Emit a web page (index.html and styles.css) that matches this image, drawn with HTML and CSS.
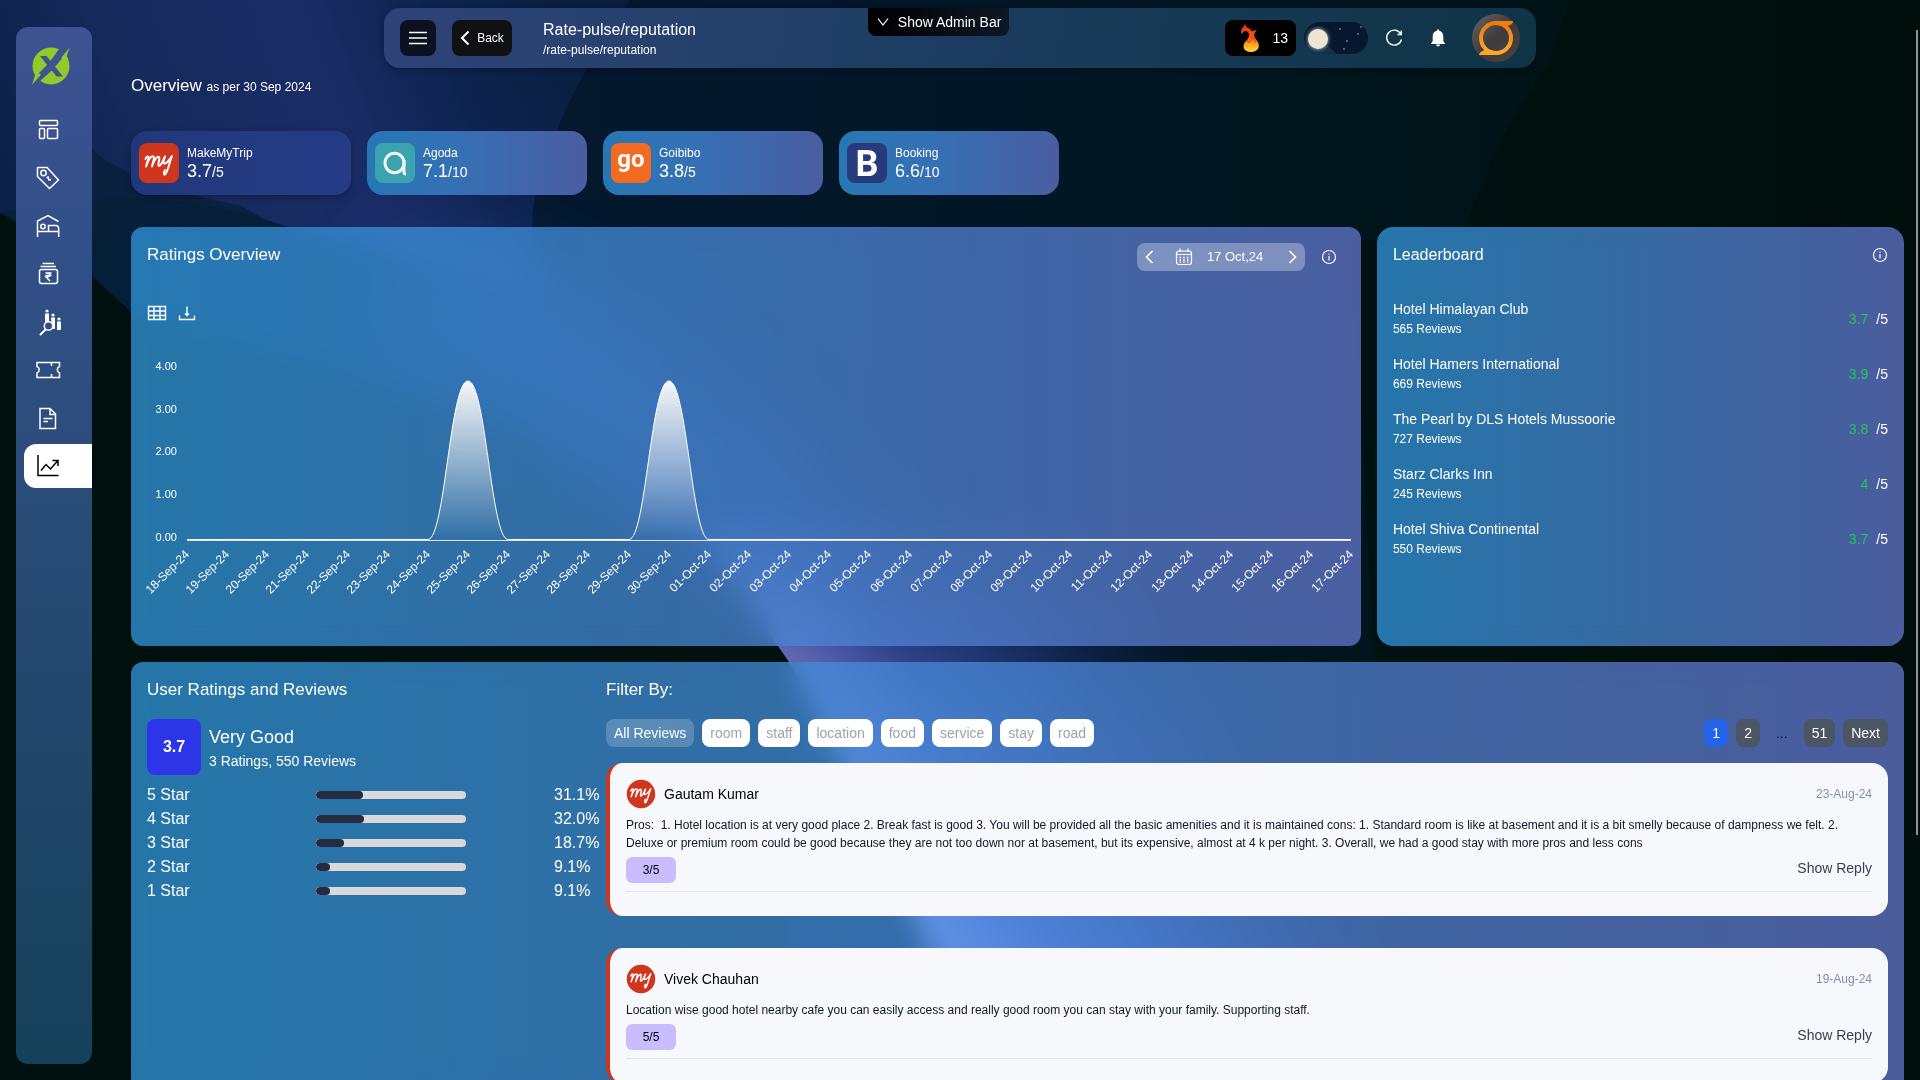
FILE: index.html
```html
<!DOCTYPE html>
<html lang="en">
<head>
<meta charset="utf-8">
<meta name="viewport" content="width=device-width, initial-scale=1">
<title>Rate-pulse/reputation</title>
<link rel="stylesheet" href="styles.css">
</head>
<body>
<svg class="backdrop" viewBox="0 0 1920 1080" preserveAspectRatio="none" aria-hidden="true">
  <defs>
    <linearGradient id="night" x1="0" y1="0" x2="1" y2="0">
      <stop offset="0" stop-color="#06203a"/><stop offset=".3" stop-color="#04182e"/><stop offset=".6" stop-color="#001722"/><stop offset="1" stop-color="#000f0c"/>
    </linearGradient>
    <linearGradient id="swath" gradientUnits="userSpaceOnUse" x1="0" y1="160" x2="560" y2="-60">
      <stop offset="0" stop-color="#0c2148"/><stop offset=".25" stop-color="#162a5c"/><stop offset=".55" stop-color="#1a2c66"/><stop offset=".75" stop-color="#0e2450"/><stop offset="1" stop-color="#071e3c"/>
    </linearGradient>
    <linearGradient id="beam" gradientUnits="userSpaceOnUse" x1="865" y1="795" x2="1187" y2="608">
      <stop offset="0" stop-color="#9a9cff"/><stop offset=".1" stop-color="#7f84f5"/><stop offset=".26" stop-color="#4d60c8"/><stop offset=".5" stop-color="#2c4496"/><stop offset=".7" stop-color="#14295c"/><stop offset="1" stop-color="#0a1c40" stop-opacity="0"/>
    </linearGradient>
    <linearGradient id="beamTop" gradientUnits="userSpaceOnUse" x1="0" y1="480" x2="0" y2="880">
      <stop offset="0" stop-color="#fff" stop-opacity="0"/><stop offset=".42" stop-color="#fff" stop-opacity=".6"/><stop offset="1" stop-color="#fff"/>
    </linearGradient>
    <mask id="beamMask" maskUnits="userSpaceOnUse" x="0" y="0" width="1920" height="1080"><rect width="1920" height="1080" fill="url(#beamTop)"/></mask>
    <filter id="soft" x="-40%" y="-40%" width="180%" height="180%"><feGaussianBlur stdDeviation="50"/></filter>
  </defs>
  <rect width="1920" height="1080" fill="url(#night)"/>
  <path d="M0 0H630C590 60 560 110 548 160C530 200 520 240 560 300L290 228C240 210 180 196 100 198L0 213Z" fill="url(#swath)"/>
  <path d="M92 148C100 165 180 196 240 205L300 240H92Z" fill="#071f3a" opacity=".8"/>
  <path d="M0 213L16 222L92 276L131 312L500 420L740 590L789 662V1080H0Z" fill="#00100e"/>
  <path d="M1350 240L1460 240L1500 140L1550 60L1570 0H1920V1080H1400Z" fill="#000f0d" opacity=".7"/>
  <path d="M400 290C540 330 700 430 840 610" fill="none" stroke="#3e58cc" stroke-width="90" opacity=".45" filter="url(#soft)"/>
  <path d="M0 646H778L789 662V1080H0Z" fill="#00100e"/>
  <path mask="url(#beamMask)" d="M690 520L778 646L789 662C840 760 900 880 985 1080H1500L1300 520Z" fill="url(#beam)"/>
</svg>

<aside class="sidebar">
  <a class="brand" href="#" aria-label="Home">
    <svg width="40" height="40" viewBox="0 0 40 40"><circle cx="20" cy="20" r="18.500" fill="#93c92a"/><path d="M9 10H15.500L32 30.500H25.500Z" fill="#3f5292"/><path d="M28 3L19 15.500L23 21.500L37 9L38 3Z" fill="#3f5292"/><path d="M8 36L22 23.500L17.500 17.500L3 32L2 38Z" fill="#3f5292"/><path d="M24 21L37 5L35.500 10A18.500 18.500 0 0 1 37 13Z" fill="#93c92a"/><path d="M39 1L34.500 12L30 12Z" fill="#93c92a"/><path d="M1 39L5 26L10 28.500Z" fill="#93c92a"/></svg>
  </a>
  <nav class="menu" aria-label="Main">
    <a href="#" aria-label="Dashboard"><svg viewBox="0 0 24 24"><rect x="3.500" y="2.500" width="18" height="5" rx="1"/><rect x="3.500" y="10.500" width="5" height="10" rx="1"/><rect x="11.500" y="10.500" width="10" height="10" rx="1"/></svg></a>
    <a href="#" aria-label="Rates"><svg viewBox="0 0 24 24"><path d="M1.500 2v8.500L13.500 22.500L22.500 14L11 1.500H2Z"/><circle cx="7.500" cy="7" r="2.700"/><path d="M10.500 12l1.500-1 1 3 2-.5"/></svg></a>
    <a href="#" aria-label="Rooms"><svg viewBox="0 0 24 24"><path d="M1.500 23V7L12 1.500L22.500 7.500M1.500 17.500H23M22.700 23V14.500Q22.500 11.500 20 11.500H12.500V17"/><circle cx="7" cy="12.500" r="2.200"/></svg></a>
    <a href="#" aria-label="Revenue"><svg viewBox="0 0 24 24"><path d="M6.500 1.500H18M4.500 4.500H20"/><rect x="3.500" y="7.500" width="18" height="14" rx="2"/><path d="M9.500 11h6M9.500 13.500h6M10.500 11q3.500 0 3.500 1.500q0 2.500-4 2.500l4 4"/></svg></a>
    <a href="#" aria-label="Competitors"><svg class="solid" viewBox="0 0 24 24"><circle cx="11" cy="1" r="1.600"/><circle cx="17" cy="5" r="1.600"/><circle cx="23" cy="9" r="1.600"/><path d="M9 3.500h4V13h-4ZM15 7.500h4V19h-3ZM21 11.500h4V20h-4Z"/><circle cx="12.500" cy="16" r="4.200" class="lens"/><path class="handle" d="M9.500 19.500L4.500 24.500"/></svg></a>
    <a href="#" aria-label="Offers"><svg viewBox="0 0 24 24"><path d="M1 4.500H23.500V8.500A3.500 3.500 0 0 0 23.500 15V19.500H1V15A3.500 3.500 0 0 0 1 8.500ZM15.500 5v3M15.500 16v3"/></svg></a>
    <a href="#" aria-label="Reports"><svg viewBox="0 0 24 24"><path d="M4 2.500H14L19.500 8V22.500H4ZM14 2.500V8.500H19.500M7.500 12.500H16.500M7.500 15.500H12"/></svg></a>
    <a href="#" class="active" aria-label="Reputation" aria-current="page"><svg viewBox="0 0 24 24"><path d="M2 1V21.500H22.500M5 16.500L10 10.500L14.500 15L21.500 7M16.500 6.500H22V12"/></svg></a>
  </nav>
</aside>

<div class="page">
  <header class="topbar">
    <button class="square" aria-label="Toggle menu"><svg width="18" height="14" viewBox="0 0 18 14"><path d="M0 1.500H18M0 7H18M0 12.500H18" stroke="#fff" stroke-width="1.500"/></svg></button>
    <button class="back"><svg width="10" height="16" viewBox="0 0 10 16"><path d="M8.500 1.500L2 8L8.500 14.500" fill="none" stroke="#fff" stroke-width="2"/></svg>Back</button>
    <div class="crumbs">
      <h1>Rate-pulse/reputation</h1>
      <p>/rate-pulse/reputation</p>
    </div>
    <button class="admin"><svg width="12" height="10" viewBox="0 0 12 10"><path d="M1 1.500L6 8L11 1.500" fill="none" stroke="#fff" stroke-width="1.200"/></svg>Show Admin Bar</button>
    <div class="actions">
      <div class="streak">
        <svg width="24" height="30" viewBox="0 0 24 30"><defs><linearGradient id="fire" x1="0" y1="0" x2="0" y2="1"><stop offset="0" stop-color="#e8320c"/><stop offset=".5" stop-color="#f5591a"/><stop offset=".72" stop-color="#fba51c"/><stop offset="1" stop-color="#ffd83a"/></linearGradient></defs><path d="M6 1C5 4 1 6 2.500 11C4 9 5 7.500 7.500 8C12 11 10 14 8 17C2 22 4 29 12 29C20 29 22 22 17.500 17C15 14 14 11 18 7C15 7.500 13 9 11.500 7C12.500 5 9 6 7.500 4Z" fill="url(#fire)"/><path d="M9 8.500c2-1 3 1 5 0M8 17l2 3 4-6 3 6" fill="none" stroke="#d93a06" stroke-width=".8"/></svg>
        <span>13</span>
      </div>
      <input class="theme" type="checkbox" aria-label="Dark mode">
      <button class="plain" aria-label="Refresh"><svg width="18" height="18" viewBox="0 0 18 18"><path d="M15.500 4.500A7.500 7.500 0 1 0 16.500 10.500M16.300 1.500V5.500H12.500" fill="none" stroke="#fff" stroke-width="1.400"/></svg></button>
      <button class="plain" aria-label="Notifications"><svg width="16" height="18" viewBox="0 0 16 18"><path d="M8 .5C8.800.5 9.200 1 9.200 1.800C12 2.500 13.300 4.500 13.300 7.500V12L15 14.500V15H1V14.500L2.700 12V7.500C2.700 4.500 4 2.500 6.800 1.800C6.800 1 7.200.5 8 .5ZM6 15.500H10A2 2 0 0 1 6 15.500Z" fill="#fff"/></svg></button>
      <button class="avatar" aria-label="Account"><svg width="48" height="48" viewBox="0 0 48 48"><defs><linearGradient id="stone" x1="0" y1="0" x2="1" y2="1"><stop offset="0" stop-color="#6a6465"/><stop offset=".5" stop-color="#3f3a3d"/><stop offset="1" stop-color="#4b4343"/></linearGradient><linearGradient id="amber" x1="0" y1="0" x2="0" y2="1"><stop offset="0" stop-color="#ee7a0a"/><stop offset="1" stop-color="#fcab2c"/></linearGradient></defs><circle cx="24" cy="24" r="24" fill="url(#stone)"/><circle cx="24" cy="24" r="15" fill="none" stroke="url(#amber)" stroke-width="4"/><path d="M22 7H41Q41 11 35 12H28Z" fill="#f07d0c"/><path d="M26 41H7Q8 37 13 36H20Z" fill="#fba828"/></svg></button>
    </div>
  </header>

  <main class="content">
    <h2 class="overview">Overview <small>as per 30 Sep 2024</small></h2>

    <section class="sources" aria-label="Sources">
      <button class="source selected">
        <svg width="40" height="40" viewBox="0 0 40 40"><rect width="40" height="40" rx="8" fill="#d0361e"/><path id="my" d="M6.500 16C7.500 13 10 12.500 9.500 15L7 23.500C9 17 12 12.500 14.500 13.500C16 14.500 13.500 20 13 23.500C15 17 18 13 20 14C21.500 15 18.500 21 19.500 22.500C21 24 24 18 26 13.500C24.500 18 23.500 20.500 25.500 20.500C28.500 20.500 31 16 33 13C30 20 29.500 27 26.500 31C25 33 24 30 26 27" fill="none" stroke="#fff" stroke-width="2" stroke-linecap="round" stroke-linejoin="round"/></svg>
        <span><b>MakeMyTrip</b><em>3.7<small>/5</small></em></span>
      </button>
      <button class="source">
        <svg width="40" height="40" viewBox="0 0 40 40"><rect width="40" height="40" rx="8" fill="#3ba3ad"/><ellipse cx="19.500" cy="20" rx="9.500" ry="9.700" fill="none" stroke="#eef3f3" stroke-width="3"/><path d="M29 17V29.500Q29 31 31 31" fill="none" stroke="#eef3f3" stroke-width="3"/></svg>
        <span><b>Agoda</b><em>7.1<small>/10</small></em></span>
      </button>
      <button class="source">
        <svg width="40" height="40" viewBox="0 0 40 40"><rect width="40" height="40" rx="8" fill="#f36b20"/><text x="20" y="24" class="mark-go">go</text></svg>
        <span><b>Goibibo</b><em>3.8<small>/5</small></em></span>
      </button>
      <button class="source">
        <svg width="40" height="40" viewBox="0 0 40 40"><rect width="40" height="40" rx="8" fill="#263a7c"/><text x="20" y="33" class="mark-b">B</text></svg>
        <span><b>Booking</b><em>6.6<small>/10</small></em></span>
      </button>
    </section>

    <div class="columns">
      <section class="panel ratings">
        <div class="panel-head">
          <h2>Ratings Overview</h2>
          <div class="head-tools">
            <div class="date">
              <button aria-label="Previous day"><svg width="9" height="14" viewBox="0 0 9 14"><path d="M7.500 1L1.500 7L7.500 13" fill="none" stroke="#fff" stroke-width="1.600"/></svg></button>
              <svg width="18" height="18" viewBox="0 0 18 18"><path d="M4 3H14Q16.500 3 16.500 5.500V14Q16.500 16.500 14 16.500H4Q1.500 16.500 1.500 14V5.500Q1.500 3 4 3ZM1.500 6.500H16.500M5 .5V4M13 .5V4" fill="none" stroke="#fff" stroke-width="1.200"/><path d="M4.500 9.500H14M4.500 12H14M4.500 14.200H14" stroke="#fff" stroke-width="1.300" stroke-dasharray="1.500 2.200"/></svg>
              <span>17 Oct,24</span>
              <button class="next" aria-label="Next day"><svg width="9" height="14" viewBox="0 0 9 14"><path d="M1.500 1L7.500 7L1.500 13" fill="none" stroke="#fff" stroke-width="1.600"/></svg></button>
            </div>
            <button class="info wide" aria-label="About ratings"><svg width="16" height="16" viewBox="0 0 16 16"><circle cx="8" cy="8" r="6.500"/><path d="M8 7V11.500M8 4.500V5.700"/></svg></button>
          </div>
        </div>
        <div class="chart-tools">
          <button aria-label="Table view"><svg width="20" height="20" viewBox="0 0 20 20"><path d="M1.500 3.500H18.500V16.500H1.500ZM1.500 8H18.500M1.500 12.500H18.500M7 3.500V16.500M13 3.500V16.500"/></svg></button>
          <button aria-label="Download"><svg width="20" height="20" viewBox="0 0 20 20"><path d="M2.500 12.500V16.500H17.500V12.500M10 3.500V12M8 10.500L10 12.500L12 10.500"/></svg></button>
        </div>
        <svg class="chart" viewBox="0 0 1230 323" role="img" aria-label="Ratings per day">
          <defs><linearGradient id="peak" x1="0" y1="0" x2="0" y2="1"><stop offset="0" stop-color="#f6f6f6"/><stop offset="1" stop-color="#f6f6f6" stop-opacity="0"/></linearGradient></defs>
          <g class="y"><text x="46" y="47">4.00</text><text x="46" y="90">3.00</text><text x="46" y="132">2.00</text><text x="46" y="175">1.00</text><text x="46" y="218">0.00</text></g>
          <path d="M297 217C314 217 319 58 337 58C355 58 360 217 377 217Z" fill="url(#peak)"/>
          <path d="M498 217C515 217 520 58 538 58C556 58 561 217 578 217Z" fill="url(#peak)"/>
          <path d="M56 216.500H297C314 216.500 319 58 337 58C355 58 360 216.500 377 216.500H498C515 216.500 520 58 538 58C556 58 561 216.500 578 216.500H1220" fill="none" stroke="#fff"/>
          <path d="M56 217.500H1220" stroke="#e6e6e6"/>
          <g class="x">
            <text transform="translate(59 232) rotate(-45)">18-Sep-24</text><text transform="translate(99 232) rotate(-45)">19-Sep-24</text><text transform="translate(139 232) rotate(-45)">20-Sep-24</text><text transform="translate(179 232) rotate(-45)">21-Sep-24</text><text transform="translate(220 232) rotate(-45)">22-Sep-24</text><text transform="translate(260 232) rotate(-45)">23-Sep-24</text><text transform="translate(300 232) rotate(-45)">24-Sep-24</text><text transform="translate(340 232) rotate(-45)">25-Sep-24</text><text transform="translate(380 232) rotate(-45)">26-Sep-24</text><text transform="translate(420 232) rotate(-45)">27-Sep-24</text><text transform="translate(460 232) rotate(-45)">28-Sep-24</text><text transform="translate(501 232) rotate(-45)">29-Sep-24</text><text transform="translate(541 232) rotate(-45)">30-Sep-24</text><text transform="translate(581 232) rotate(-45)">01-Oct-24</text><text transform="translate(621 232) rotate(-45)">02-Oct-24</text><text transform="translate(661 232) rotate(-45)">03-Oct-24</text><text transform="translate(701 232) rotate(-45)">04-Oct-24</text><text transform="translate(741 232) rotate(-45)">05-Oct-24</text><text transform="translate(782 232) rotate(-45)">06-Oct-24</text><text transform="translate(822 232) rotate(-45)">07-Oct-24</text><text transform="translate(862 232) rotate(-45)">08-Oct-24</text><text transform="translate(902 232) rotate(-45)">09-Oct-24</text><text transform="translate(942 232) rotate(-45)">10-Oct-24</text><text transform="translate(982 232) rotate(-45)">11-Oct-24</text><text transform="translate(1022 232) rotate(-45)">12-Oct-24</text><text transform="translate(1063 232) rotate(-45)">13-Oct-24</text><text transform="translate(1103 232) rotate(-45)">14-Oct-24</text><text transform="translate(1143 232) rotate(-45)">15-Oct-24</text><text transform="translate(1183 232) rotate(-45)">16-Oct-24</text><text transform="translate(1223 232) rotate(-45)">17-Oct-24</text>
          </g>
        </svg>
      </section>

      <section class="panel leaders">
        <div class="leaders-head">
          <h2>Leaderboard</h2>
          <button class="info" aria-label="About leaderboard"><svg width="16" height="16" viewBox="0 0 16 16"><circle cx="8" cy="8" r="6.500"/><path d="M8 7V11.500M8 4.500V5.700"/></svg></button>
        </div>
        <ul>
          <li><div><h3>Hotel Himalayan Club</h3><p>565 Reviews</p></div><span class="score"><b>3.7</b>/5</span></li>
          <li><div><h3>Hotel Hamers International</h3><p>669 Reviews</p></div><span class="score"><b>3.9</b>/5</span></li>
          <li><div><h3>The Pearl by DLS Hotels Mussoorie</h3><p>727 Reviews</p></div><span class="score"><b>3.8</b>/5</span></li>
          <li><div><h3>Starz Clarks Inn</h3><p>245 Reviews</p></div><span class="score"><b>4</b>/5</span></li>
          <li><div><h3>Hotel Shiva Continental</h3><p>550 Reviews</p></div><span class="score"><b>3.7</b>/5</span></li>
        </ul>
      </section>
    </div>

    <section class="panel reviews">
      <div class="summary">
        <h2>User Ratings and Reviews</h2>
        <div class="verdict">
          <strong>3.7</strong>
          <div><h3>Very Good</h3><p>3 Ratings, 550 Reviews</p></div>
        </div>
        <dl class="stars">
          <div><dt>5 Star</dt><dd class="track"><span style="width:31.1%"></span></dd><dd class="share">31.1%</dd></div>
          <div><dt>4 Star</dt><dd class="track"><span style="width:32.0%"></span></dd><dd class="share">32.0%</dd></div>
          <div><dt>3 Star</dt><dd class="track"><span style="width:18.7%"></span></dd><dd class="share">18.7%</dd></div>
          <div><dt>2 Star</dt><dd class="track"><span style="width:9.1%"></span></dd><dd class="share">9.1%</dd></div>
          <div><dt>1 Star</dt><dd class="track"><span style="width:9.1%"></span></dd><dd class="share">9.1%</dd></div>
        </dl>
      </div>
      <div class="feed">
        <h2>Filter By:</h2>
        <div class="filters">
          <div class="chips">
            <button class="on">All Reviews</button><button>room</button><button>staff</button><button>location</button><button>food</button><button>service</button><button>stay</button><button>road</button>
          </div>
          <nav class="pager" aria-label="Pages">
            <button class="on">1</button><button>2</button><span>...</span><button>51</button><button>Next</button>
          </nav>
        </div>
        <article class="review">
          <header><svg width="30" height="30" viewBox="0 0 40 40"><circle cx="20" cy="20" r="19" fill="#d0361e"/><use href="#my"/></svg><h3>Gautam Kumar</h3><time datetime="2024-08-23">23-Aug-24</time></header>
          <p>Pros: &nbsp;1. Hotel location is at very good place 2. Break fast is good 3. You will be provided all the basic amenities and it is maintained cons: 1. Standard room is like at basement and it is a bit smelly because of dampness we felt. 2. Deluxe or premium room could be good because they are not too down nor at basement, but its expensive, almost at 4 k per night. 3. Overall, we had a good stay with more pros and less cons</p>
          <footer><span class="badge">3/5</span><button>Show Reply</button></footer>
        </article>
        <article class="review">
          <header><svg width="30" height="30" viewBox="0 0 40 40"><circle cx="20" cy="20" r="19" fill="#d0361e"/><use href="#my"/></svg><h3>Vivek Chauhan</h3><time datetime="2024-08-19">19-Aug-24</time></header>
          <p>Location wise good hotel nearby cafe you can easily access and really good room you can stay with your family. Supporting staff.</p>
          <footer><span class="badge">5/5</span><button>Show Reply</button></footer>
        </article>
      </div>
    </section>
  </main>
</div>
<div class="scroll-thumb" aria-hidden="true"></div>
</body>
</html>
```
FILE: styles.css
```css
* { box-sizing: border-box; }

html, body { height: 100%; }

body {
  margin: 0;
  overflow: hidden;
  background: #00100e;
  color: #fff;
  font-family: "Liberation Sans", Arial, sans-serif;
  font-size: 14px;
  line-height: 20px;
}

h1, h2, h3, p, ul, dl, dd { margin: 0; padding: 0; font-weight: 400; }
ul { list-style: none; }
svg { display: block; flex: none; }

button {
  padding: 0;
  border: 0;
  background: none;
  color: inherit;
  font: inherit;
  cursor: pointer;
}

h2 { font-size: 17px; line-height: 24px; }

.backdrop { position: fixed; inset: 0; width: 100%; height: 100%; }

.page {
  position: relative;
  height: 100vh;
  overflow-y: auto;
  scrollbar-width: none;
}

.scroll-thumb {
  position: fixed;
  top: 30px;
  right: 2px;
  width: 2px;
  height: 74.5vh;
  background: #8e9292;
}

/* Sidebar */
.sidebar {
  position: fixed;
  z-index: 2;
  top: 27px;
  bottom: 16px;
  left: 16px;
  width: 76px;
  padding-top: 19px;
  border-radius: 12px;
  background: linear-gradient(180deg, #3f5292 0%, #33508a 20%, #2a4c78 45%, #15405a 100%);
}
.brand { display: block; width: 40px; margin: 0 0 22px 15px; }
.menu { display: flex; flex-direction: column; gap: 4px; padding-left: 8px; }
.menu a {
  display: flex;
  align-items: center;
  height: 44px;
  padding-left: 12px;
  border-radius: 12px 0 0 12px;
  color: #fff;
}
.menu a.active { background: #fff; color: #000; }
.menu svg {
  width: 24px;
  height: 24px;
  overflow: visible;
  fill: none;
  stroke: currentColor;
  stroke-width: 1.5;
}
.menu .solid { fill: #fff; stroke: none; }
.menu .lens { fill: #2f4f84; stroke: #fff; stroke-width: 1.5; }
.menu .handle { stroke: #fff; stroke-width: 2; stroke-linecap: round; }

/* Top bar */
.topbar {
  position: relative;
  display: flex;
  align-items: center;
  width: 60%;
  height: 60px;
  margin: 8px auto 0;
  padding: 0 16px;
  border-radius: 16px;
  background: linear-gradient(100deg, #2f4378 0%, #24416b 28%, #1c3c60 50%, #143850 78%, #0e3446 100%);
  box-shadow: 0 2px 6px rgba(0, 0, 0, .3);
}
.square, .back {
  display: flex;
  align-items: center;
  justify-content: center;
  height: 36px;
  border-radius: 8px;
}
.square { width: 36px; background: #0b1120; }
.back { gap: 7px; width: 60px; margin-left: 16px; background: #101112; font-size: 12px; }
.crumbs { margin-left: 31px; padding-top: 2px; }
.crumbs h1 { font-size: 16px; line-height: 22px; }
.crumbs p { font-size: 12px; line-height: 18px; }
.admin {
  position: absolute;
  top: 0;
  left: 42%;
  display: flex;
  align-items: center;
  gap: 9px;
  height: 28px;
  padding: 0 8px 0 9px;
  border-radius: 0 0 8px 8px;
  background: linear-gradient(90deg, #000, #0d1826);
}
.actions { display: flex; align-items: center; gap: 8px; margin-left: auto; }
.streak {
  display: flex;
  align-items: center;
  justify-content: flex-end;
  gap: 9px;
  width: 71px;
  height: 36px;
  padding-right: 8px;
  border-radius: 8px;
  background: #000;
}
.theme {
  appearance: none;
  width: 64px;
  height: 32px;
  margin: 0;
  padding: 7px 4px;
  border-radius: 16px;
  background:
    radial-gradient(circle at 36px 7px, #4a5f7c 1px, transparent 1px),
    radial-gradient(circle at 43px 19px, #4a5f7c 1px, transparent 1px),
    radial-gradient(circle at 54px 12px, #4a5f7c 1px, transparent 1px),
    radial-gradient(circle at 57px 5px, #4a5f7c 1px, transparent 1px),
    radial-gradient(circle at 40px 27px, #4a5f7c 1px, transparent 1px),
    radial-gradient(circle at 12px 46px, #12304a 24px, transparent 25px),
    #06182f;
}
.theme::before {
  content: "";
  display: block;
  width: 20px;
  height: 20px;
  border-radius: 50%;
  background: #ece5d3;
  box-shadow: 0 0 4px #cfd6d6;
}
.plain { display: grid; place-items: center; width: 36px; height: 36px; }
.avatar { margin-left: 8px; }

/* Content */
.content { padding: 6px 16px 32px 131px; }
.overview { margin-bottom: 32px; }
.overview small { font-size: 12px; }

.sources { display: flex; gap: 16px; margin-bottom: 32px; }
.source {
  display: flex;
  align-items: center;
  gap: 8px;
  width: 220px;
  height: 64px;
  padding: 0 8px;
  border-radius: 16px;
  background: linear-gradient(90deg, #2777b3, #3570b5 40%, #4a5da1);
  text-align: left;
}
.source.selected { background: linear-gradient(90deg, #20387b, #263b86); box-shadow: 0 2px 6px rgba(0, 0, 0, .3); }
.source b { display: block; font-size: 12px; line-height: 16px; font-weight: 400; }
.source em { display: block; font-size: 18px; line-height: 20px; font-style: normal; }
.source em small { font-size: 14px; }
.mark-go { fill: #fff; font: 700 24px Roboto, sans-serif; text-anchor: middle; }
.mark-b { fill: #fff; font: 700 36px Roboto, sans-serif; text-anchor: middle; }

.columns {
  display: grid;
  grid-template-columns: minmax(0, 7fr) minmax(0, 3fr);
  gap: 16px;
  margin-bottom: 16px;
}
.panel {
  border-radius: 12px;
  background: linear-gradient(90deg, rgba(49, 152, 222, .75), rgba(99, 120, 206, .75));
  backdrop-filter: blur(12px);
}
.ratings { padding-top: 16px; }
.panel-head { display: flex; justify-content: space-between; padding: 0 16px; }
.head-tools { display: flex; gap: 8px; }
.date {
  display: flex;
  align-items: center;
  width: 168px;
  height: 28px;
  padding: 0 8px;
  border-radius: 8px;
  background: rgba(255, 255, 255, .3);
  font-size: 13px;
}
.date > svg { margin: 0 14px 0 21px; }
.date .next { margin-left: auto; }
.info { display: grid; place-items: center; height: 24px; }
.info.wide { width: 32px; height: 28px; }
.info svg { fill: none; stroke: #fff; stroke-width: 1.2; }
.chart-tools { display: flex; gap: 10px; margin-top: 32px; padding: 0 16px; }
.chart-tools svg { fill: none; stroke: #fff; stroke-width: 1.4; }
.chart { width: 100%; height: auto; }
.chart text { fill: #fff; text-anchor: end; }
.y { font-size: 11px; }
.x { font-size: 12px; }

.leaders { padding: 16px; border-radius: 16px; }
.leaders-head { display: flex; justify-content: space-between; margin-bottom: 32px; }
.leaders h2 { font-size: 16px; }
.leaders ul { display: flex; flex-direction: column; gap: 15px; }
.leaders li { display: flex; align-items: center; justify-content: space-between; }
.leaders h3 { font-size: 14px; }
.leaders p { font-size: 12px; }
.score { display: flex; gap: 8px; }
.score b { color: #22c55e; font-weight: 400; }

/* Reviews */
.reviews { display: grid; grid-template-columns: 459px minmax(0, 1fr); padding: 16px; }
.reviews h2 { margin-bottom: 17px; }
.verdict { display: flex; align-items: center; gap: 8px; margin-bottom: 8px; }
.verdict strong {
  display: grid;
  place-items: center;
  width: 54px;
  height: 56px;
  border-radius: 8px;
  background: #2c36e8;
  font-size: 16px;
}
.verdict h3 { font-size: 18px; line-height: 28px; }
.stars { font-size: 16px; line-height: 24px; }
.stars > div { display: grid; grid-template-columns: 169px 150px 1fr; align-items: center; }
.track { height: 8px; overflow: hidden; border-radius: 4px; background: #d9d9d9; }
.track span { display: block; height: 8px; border-radius: 4px; background: #262b40; }
.share { width: 52px; margin-left: auto; }

.filters { display: flex; justify-content: space-between; margin-bottom: 16px; }
.chips, .pager { display: flex; gap: 8px; }
.filters button, .pager span { height: 28px; padding: 0 8px; border-radius: 8px; line-height: 28px; }
.chips button { background: #fff; color: #9ca3af; }
.chips .on { background: rgba(255, 255, 255, .2); color: #fff; }
.pager button { background: #4b5563; }
.pager .on { background: #2563eb; }
.pager span { color: #111; }

.review {
  padding: 16px 16px 24px;
  border-left: 4px solid #d0361e;
  border-radius: 16px;
  background: #f7f8fc;
  color: #000;
}
.review + .review { margin-top: 32px; }
.review header { display: flex; align-items: center; gap: 8px; height: 30px; margin-bottom: 7px; }
.review h3 { font-size: 14px; }
.review time { margin-left: auto; color: #8090a8; font-size: 12px; }
.review p { margin-bottom: 5px; color: #0f172a; font-size: 12px; line-height: 18px; }
.review footer {
  display: flex;
  align-items: flex-start;
  justify-content: space-between;
  padding-bottom: 8px;
  border-bottom: 1px solid #e2e5ea;
}
.badge {
  width: 50px;
  border-radius: 6px;
  background: #c9bdff;
  font-size: 12px;
  line-height: 26px;
  text-align: center;
}
.review footer button { color: #374151; line-height: 22px; }
```
